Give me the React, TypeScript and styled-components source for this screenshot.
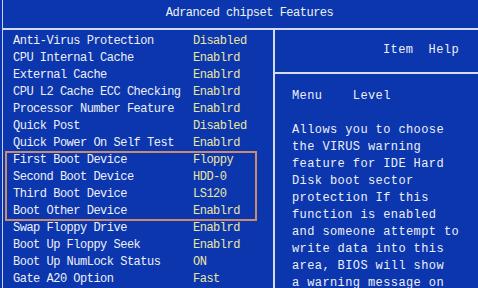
import styled, { createGlobalStyle } from "styled-components";

type SettingType = {
	label: string;
	value: string;
};

const settings: SettingType[] = [
	{ label: "Anti-Virus Protection", value: "Disabled" },
	{ label: "CPU Internal Cache", value: "Enablrd" },
	{ label: "External Cache", value: "Enablrd" },
	{ label: "CPU L2 Cache ECC Checking", value: "Enablrd" },
	{ label: "Processor Number Feature", value: "Enablrd" },
	{ label: "Quick Post", value: "Disabled" },
	{ label: "Quick Power On Self Test", value: "Enablrd" },
];

const bootSettings: SettingType[] = [
	{ label: "First Boot Device", value: "Floppy" },
	{ label: "Second Boot Device", value: "HDD-0" },
	{ label: "Third Boot Device", value: "LS120" },
	{ label: "Boot Other Device", value: "Enablrd" },
];

const moreSettings: SettingType[] = [
	{ label: "Swap Floppy Drive", value: "Enablrd" },
	{ label: "Boot Up Floppy Seek", value: "Enablrd" },
	{ label: "Boot Up NumLock Status", value: "ON" },
	{ label: "Gate A20 Option", value: "Fast" },
];

const helpLines = [
	"Allows you to choose",
	"the VIRUS warning",
	"feature for IDE Hard",
	"Disk boot sector",
	"protection If this",
	"function is enabled",
	"and someone attempt to",
	"write data into this",
	"area, BIOS will show",
	"a warning message on",
];

const GlobalStyle = createGlobalStyle`
  html, body {
    margin: 0;
    padding: 0;
    background: #0b36ae;
  }
`;

const Screen = styled.div`
  width: 478px;
  height: 288px;
  overflow: hidden;
  background: #0b36ae;
  font-family: "Liberation Mono", "Courier New", monospace;
  font-size: 12px;
  color: #eef0f6;
  box-sizing: border-box;
  padding-left: 2px;
`;

const Frame = styled.div`
  height: 100%;
  border-left: 1px solid #c4d0ee;
  display: flex;
  flex-direction: column;
`;

const Title = styled.div`
  height: 30px;
  line-height: 27px;
  text-align: center;
  padding-left: 18px;
  letter-spacing: -0.5px;
  border-bottom: 2px solid #d4dcf2;
  box-sizing: border-box;
  flex-shrink: 0;
`;

const Body = styled.div`
  flex: 1;
  display: grid;
  grid-template-columns: 272px 1fr;
`;

const LeftPanel = styled.div`
  padding-top: 3px;
  border-right: 2px solid #d4dcf2;
`;

const Row = styled.div`
  display: grid;
  grid-template-columns: 180px 1fr;
  height: 17px;
  line-height: 17px;
  padding-left: 10px;
  letter-spacing: -0.5px;
  white-space: pre;
`;

const Value = styled.span`
  color: #ebe6a2;
`;

const BootGroup = styled.div`
  margin: 0 17px 0 3px;
  outline: 2px solid #c98c6c;
  outline-offset: -1px;

  ${Row} {
    padding-left: 7px;
  }
`;

const RightPanel = styled.div`
  display: flex;
  flex-direction: column;
  letter-spacing: 0.4px;
`;

const ItemHelp = styled.div`
  height: 44px;
  box-sizing: border-box;
  padding: 12px 19px 0 0;
  line-height: 17px;
  text-align: right;
  white-space: pre;
  border-bottom: 2px solid #d4dcf2;
`;

const HelpBody = styled.div`
  padding: 14px 0 0 17px;
`;

const HelpLine = styled.div`
  height: 17px;
  line-height: 17px;
  white-space: pre;
`;

function SettingRow({ item }: { item: SettingType }) {
	return (
		<Row>
			<span>{item.label}</span>
			<Value>{item.value}</Value>
		</Row>
	);
}

export default function App() {
	return (
		<Screen>
			<GlobalStyle />
			<Frame>
				<Title>Adranced chipset Features</Title>
				<Body>
					<LeftPanel>
						{settings.map((v) => (
							<SettingRow key={v.label} item={v} />
						))}
						<BootGroup>
							{bootSettings.map((v) => (
								<SettingRow key={v.label} item={v} />
							))}
						</BootGroup>
						{moreSettings.map((v) => (
							<SettingRow key={v.label} item={v} />
						))}
					</LeftPanel>
					<RightPanel>
						<ItemHelp>{"Item  Help"}</ItemHelp>
						<HelpBody>
							<HelpLine>{"Menu    Level"}</HelpLine>
							<HelpLine />
							{helpLines.map((v, i) => (
								<HelpLine key={`help-${i}`}>{v}</HelpLine>
							))}
						</HelpBody>
					</RightPanel>
				</Body>
			</Frame>
		</Screen>
	);
}
